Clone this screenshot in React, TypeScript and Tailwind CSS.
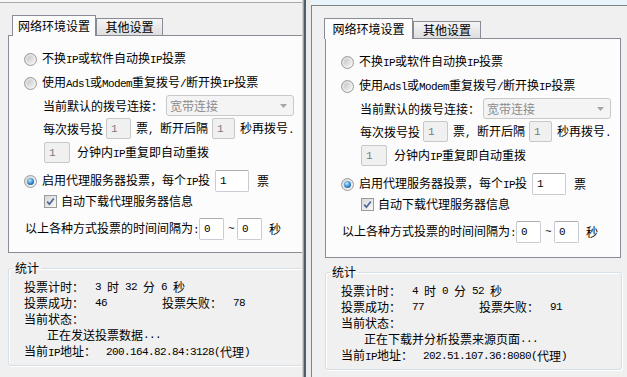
import React from "react";

const MONO = "font-['Liberation_Mono',monospace] text-[11px] tracking-[-0.6px] whitespace-pre";

function Tx({ s }: { s: string }) {
  const parts = s.split(/([\x20-\x7e]+)/).filter((p) => p.length > 0);
  return (
    <>
      {parts.map((p, i) =>
        /^[\x20-\x7e]+$/.test(p) ? (
          <span key={i} className={MONO}>
            {p}
          </span>
        ) : (
          <span key={i}>{p}</span>
        )
      )}
    </>
  );
}

function Radio({ on }: { on?: boolean }) {
  return (
    <span className="w-[13px] h-[13px] shrink-0 rounded-full border border-[#9a9a9a] bg-[linear-gradient(135deg,#d6d6d6,#f7f7f7)] flex items-center justify-center">
      <span
        className={
          on
            ? "w-[7px] h-[7px] rounded-full bg-[radial-gradient(circle_at_40%_35%,#c4ebfd,#2f86cc_55%,#0d4683)]"
            : "w-[7px] h-[7px] rounded-full bg-[linear-gradient(135deg,#c6c6c6,#f1f1f1)]"
        }
      />
    </span>
  );
}

function Check() {
  return (
    <span className="w-[13px] h-[13px] shrink-0 border border-[#9a9a9a] bg-[linear-gradient(135deg,#d8d8d8,#f8f8f8)] flex items-center justify-center">
      <svg width="9" height="9" viewBox="0 0 9 9">
        <path d="M1.2 4.6 L3.4 7.2 L7.8 1.4" fill="none" stroke="#4a679a" strokeWidth="1.7" />
      </svg>
    </span>
  );
}

function Box({ v, cls, dis }: { v: string; cls: string; dis?: boolean }) {
  return (
    <span
      className={`${cls} shrink-0 flex items-center pl-[4px] border rounded-[2px] ${
        dis
          ? "bg-[#f0f0f0] border-[#c8c8c8] text-[#7a7a7a]"
          : "bg-white border-[#c9ccd2] border-t-[#abadb3]"
      }`}
    >
      <span className={MONO}>{v}</span>
    </span>
  );
}

type P = {
  tabMl: string;
  tabA: string;
  tabB: string;
  pageH: string;
  fsMt: string;
  time: string;
  ok: string;
  fail: string;
  status: string;
  ip: string;
};

function Panel(p: P) {
  return (
    <div className="w-[296px] shrink-0">
      <div className={`flex items-end h-[21px] relative z-10 ${p.tabMl}`}>
        <div
          className={`${p.tabA} h-[21px] border border-b-0 border-[#898c95] bg-[#fcfcfc] flex items-center justify-center pb-[1px]`}
        >
          网络环境设置
        </div>
        <div
          className={`${p.tabB} h-[18px] border border-[#898c95] bg-[linear-gradient(#f5f5f5,#dedede)] flex items-center justify-center`}
        >
          其他设置
        </div>
      </div>
      <div className={`-mt-px ${p.pageH} border border-[#898c95] bg-[#fcfcfc] flex flex-col`}>
        <div className="mt-[13px] h-[20px] pl-[15px] flex items-center">
          <Radio />
          <span className="ml-[5px]">
            <Tx s="不换IP或软件自动换IP投票" />
          </span>
        </div>
        <div className="mt-[4px] h-[20px] pl-[15px] flex items-center">
          <Radio />
          <span className="ml-[5px]">
            <Tx s="使用Adsl或Modem重复拨号/断开换IP投票" />
          </span>
        </div>
        <div className="mt-[2px] h-[21px] pl-[34px] flex items-center">
          <span>当前默认的拨号连接：</span>
          <span className="ml-[3px] w-[128px] h-[21px] border border-[#c9c9c9] rounded-[3px] bg-[#f4f4f4] flex items-center pl-[3px] text-[#8c8c8c]">
            <span>宽带连接</span>
            <svg className="ml-auto mr-[6px]" width="7" height="4" viewBox="0 0 7 4">
              <path d="M0 0H7L3.5 4Z" fill="#a6a6a6" />
            </svg>
          </span>
        </div>
        <div className="mt-[2px] h-[21px] pl-[34px] flex items-center">
          <span>每次拨号投</span>
          <span className="ml-[3px]">
            <Box v="1" cls="w-[25px] h-[21px]" dis />
          </span>
          <span className="ml-[5px]">
            <Tx s="票, 断开后隔" />
          </span>
          <span className="ml-[4px]">
            <Box v="1" cls="w-[23px] h-[21px]" dis />
          </span>
          <span className="ml-[5px]">
            <Tx s="秒再拨号." />
          </span>
        </div>
        <div className="mt-[3px] h-[21px] pl-[35px] flex items-center">
          <Box v="1" cls="w-[26px] h-[21px]" dis />
          <span className="ml-[7px]">
            <Tx s="分钟内IP重复即自动重拨" />
          </span>
        </div>
        <div className="mt-[7px] h-[22px] pl-[15px] flex items-center">
          <Radio on />
          <span className="ml-[5px]">
            <Tx s="启用代理服务器投票，每个IP投" />
          </span>
          <span className="ml-[5px]">
            <Box v="1" cls="w-[34px] h-[22px]" />
          </span>
          <span className="ml-[8px]">票</span>
        </div>
        <div className="h-[18px] pl-[35px] flex items-center">
          <Check />
          <span className="ml-[4px]">自动下载代理服务器信息</span>
        </div>
        <div className="mt-[8px] h-[22px] pl-[16px] flex items-center">
          <span>
            <Tx s="以上各种方式投票的时间间隔为:" />
          </span>
          <Box v="0" cls="w-[25px] h-[22px]" />
          <span className={`ml-[4px] ${MONO}`}>~</span>
          <span className="ml-[3px]">
            <Box v="0" cls="w-[25px] h-[22px]" />
          </span>
          <span className="ml-[7px]">秒</span>
        </div>
      </div>
      <fieldset
        className={`${p.fsMt} w-[297px] border border-[#d5dfe5] rounded-[3px] shadow-[inset_1px_1px_0_#ffffff,1px_1px_0_#ffffff] pt-[4px] pb-[5px]`}
      >
        <legend className="ml-[4px] px-[2px] leading-[14px]">统计</legend>
        <div className="pl-[15px]">
          <div className="h-[16px] flex items-center">
            <span className="w-[71px] shrink-0">投票计时：</span>
            <Tx s={p.time} />
          </div>
          <div className="h-[16px] flex items-center">
            <span className="w-[71px] shrink-0">投票成功：</span>
            <span className={`w-[67px] shrink-0 ${MONO}`}>{p.ok}</span>
            <span className="w-[71px] shrink-0">投票失败：</span>
            <span className={MONO}>{p.fail}</span>
          </div>
          <div className="h-[16px] flex items-center">
            <span>当前状态：</span>
          </div>
          <div className="h-[16px] flex items-center pl-[23px]">
            <Tx s={p.status} />
          </div>
          <div className="h-[17px] flex items-center">
            <span className="w-[82px] shrink-0">
              <Tx s="当前IP地址：" />
            </span>
            <Tx s={p.ip} />
          </div>
        </div>
      </fieldset>
    </div>
  );
}

export default function App() {
  return (
    <div className="w-[627px] h-[377px] overflow-hidden bg-[#f0f0f0] flex font-['Noto_Sans_CJK_SC',sans-serif] text-[12px] leading-[14px] text-black">
      <div className="w-[302px] shrink-0 overflow-hidden flex flex-col">
        <div className="h-[2px] bg-[#f7f7f7]" />
        <div className="flex-1 border-t border-[#a9a9a9] pt-[12px] pl-[8px]">
          <Panel
            tabMl="ml-[4px]"
            tabA="w-[84px]"
            tabB="w-[67px]"
            pageH="h-[218px]"
            fsMt="mt-[8px]"
            time="3 时 32 分 6 秒"
            ok="46"
            fail="78"
            status="正在发送投票数据..."
            ip="200.164.82.84:3128(代理)"
          />
        </div>
      </div>
      <div className="w-[9px] shrink-0 flex">
        <div className="w-[1px] bg-[#d2d2d2]" />
        <div className="w-[1px] bg-[#9ba3a8]" />
        <div className="w-[2px] bg-[#4f5d66]" />
        <div className="w-[5px] bg-[#ebebeb]" />
      </div>
      <div className="flex-1 flex flex-col">
        <div className="h-[5px] bg-[#e8f4f9]" />
        <div className="flex-1 border-t border-l border-[#7d8489] pt-[12px] pl-[13px]">
          <Panel
            tabMl="-ml-[1px]"
            tabA="w-[89px]"
            tabB="w-[68px]"
            pageH="h-[220px]"
            fsMt="mt-[7px]"
            time="4 时 0 分 52 秒"
            ok="77"
            fail="91"
            status="正在下载并分析投票来源页面..."
            ip="202.51.107.36:8080(代理)"
          />
        </div>
      </div>
    </div>
  );
}
